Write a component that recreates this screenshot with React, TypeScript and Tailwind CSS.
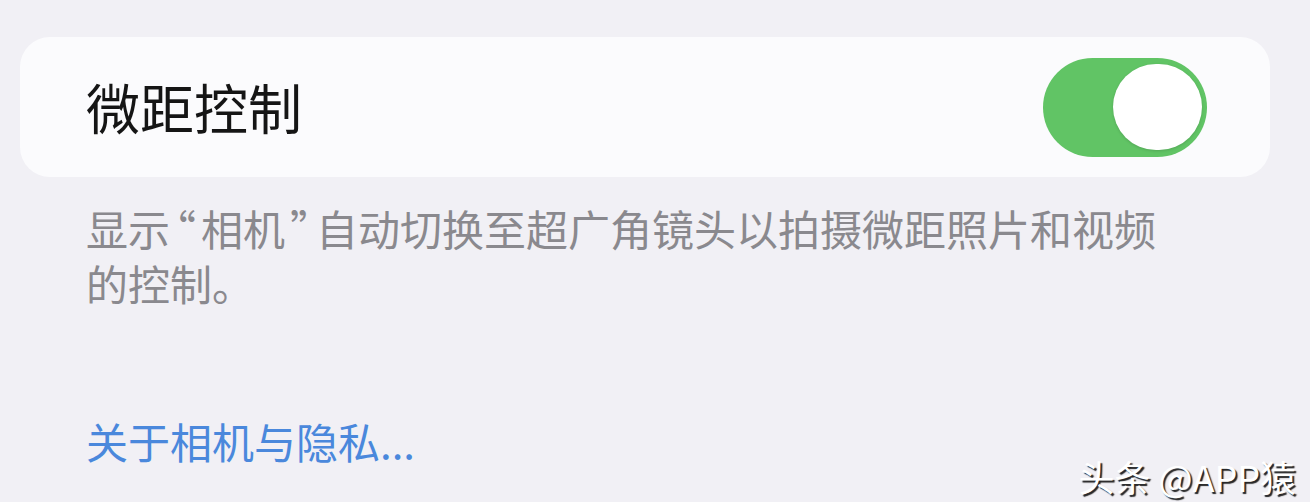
export default function App() {
  return (
    <main
      className="relative w-[1310px] h-[502px] overflow-hidden bg-[#f1f0f5] px-[20px] pt-[37px]"
      style={{ fontFamily: '"Noto Sans CJK SC", "Noto Sans", sans-serif' }}
    >
      {/* Toggle row */}
      <div className="flex h-[140px] w-[1250px] items-center justify-between rounded-[30px] bg-[#fbfbfd] pl-[66px] pr-[63px]">
        <span className="text-[54px] leading-none text-[#151515]">微距控制</span>
        <div className="flex h-[99px] w-[164px] items-center justify-end rounded-full bg-[#61c465] pr-[5px]">
          <div className="h-[86px] w-[89px] rounded-full bg-white shadow-[0_1px_3px_rgba(0,0,0,0.15)]"></div>
        </div>
      </div>

      {/* Footer text */}
      <p className="mt-[23px] w-[1160px] pl-[66px] text-[42px] leading-[55px] text-[#8a898e]">
        显示<span className="px-[5px] [font-feature-settings:'halt']">“</span>相机<span className="px-[5px] [font-feature-settings:'halt']">”</span>自动切换至超广角镜头以拍摄微距照片和视频的控制。
      </p>

      <p className="mt-[103px] pl-[66px] text-[42px] leading-[55px] text-[#4a88dc]">关于相机与隐私...</p>

      {/* Watermark */}
      <span className="absolute right-[14px] bottom-[4px] text-[36px] leading-[44px] text-white [text-shadow:2px_2px_1px_rgba(0,0,0,0.85)]">
        头条 @APP猿
      </span>
    </main>
  );
}
